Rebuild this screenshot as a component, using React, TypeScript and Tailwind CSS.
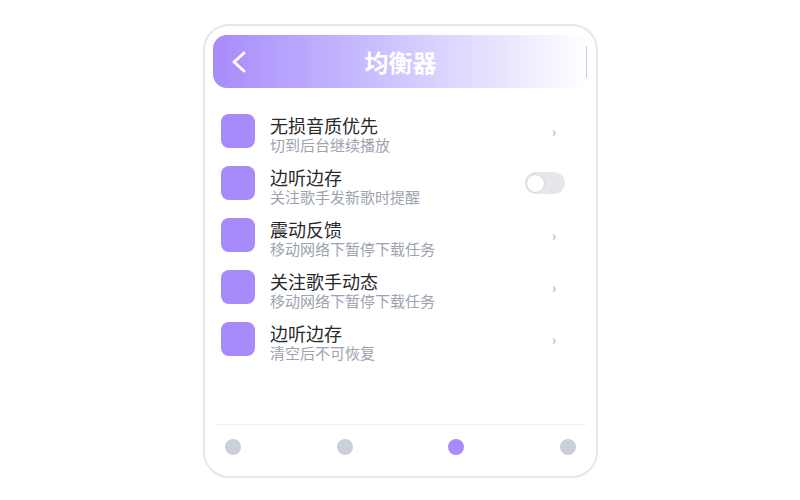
import React from "react";

const items = [
  { title: "无损音质优先", sub: "切到后台继续播放", right: "chev" },
  { title: "边听边存", sub: "关注歌手发新歌时提醒", right: "toggle" },
  { title: "震动反馈", sub: "移动网络下暂停下载任务", right: "chev" },
  { title: "关注歌手动态", sub: "移动网络下暂停下载任务", right: "chev" },
  { title: "边听边存", sub: "清空后不可恢复", right: "chev" },
];

export default function App() {
  return (
    <div
      className="w-[800px] h-[500px] bg-white pt-[24px]"
      style={{ fontFamily: '"Noto Sans CJK SC", "Noto Sans", sans-serif' }}
    >
      <div className="ml-[203px] w-[395px] h-[454px] border-2 border-[#e5e7eb] rounded-[26px] flex flex-col px-[8px] pt-[9px]">
        <div className="h-[53px] rounded-[14px] bg-gradient-to-r from-[#a78bfa] to-white flex items-center">
          <div className="w-[40px] pl-[19px] flex items-center">
            <svg width="14" height="22" viewBox="0 0 14 22" fill="none">
              <polyline points="12,2 2,11 12,20" stroke="white" strokeWidth="3" strokeLinecap="round" strokeLinejoin="round" />
            </svg>
          </div>
          <div className="flex-1 text-center text-white text-[24px] font-bold leading-none">均衡器</div>
          <div className="w-[40px] h-[32px] flex justify-end pr-[1px]">
            <div className="w-[1px] h-full bg-[#cfc3f7]" />
          </div>
        </div>

        <div className="flex flex-col mt-[26px] pl-[8px]">
          {items.map((it, i) => (
            <div key={i} className="flex items-start h-[52px]">
              <div className="w-[34px] h-[34px] rounded-[8px] bg-[#a78bfa] shrink-0" />
              <div className="flex-1 ml-[15px] pt-[1px]">
                <div className="text-[18px] leading-[21px] text-[#2a2a2a]">{it.title}</div>
                <div className="text-[15px] leading-[18px] text-[#9ca3af]">{it.sub}</div>
              </div>
              <div className="h-[34px] flex items-center justify-center w-[50px] mr-[18px]">
                {it.right === "chev" ? (
                  <span className="text-[14px] text-[#9ca3af] ml-[18px]">›</span>
                ) : (
                  <div className="w-[40px] h-[22px] rounded-full bg-[#e5e7eb] flex items-center pl-[1px]">
                    <div className="w-[19px] h-[19px] rounded-full bg-white border border-[#d1d5db]" />
                  </div>
                )}
              </div>
            </div>
          ))}
        </div>

        <div className="flex-1" />

        <div className="mx-[2px] border-t border-[#f0f0f3] h-[52px] flex items-center justify-between px-[10px] pb-[8px]">
          <div className="w-[16px] h-[16px] rounded-full bg-[#cbd0d7]" />
          <div className="w-[16px] h-[16px] rounded-full bg-[#cbd0d7]" />
          <div className="w-[16px] h-[16px] rounded-full bg-[#a78bfa]" />
          <div className="w-[16px] h-[16px] rounded-full bg-[#cbd0d7]" />
        </div>
      </div>
    </div>
  );
}
